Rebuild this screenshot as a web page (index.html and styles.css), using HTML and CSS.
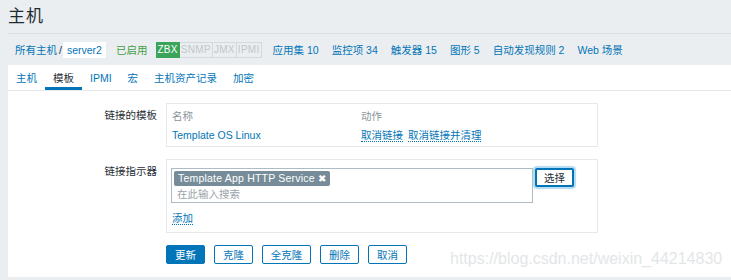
FILE: index.html
```html
<!DOCTYPE html>
<html lang="zh-CN">
<head>
  <meta charset="UTF-8">
  <title>主机</title>
  <link rel="stylesheet" href="styles.css">
</head>
<body>
  <header class="page-header">
    <h1>主机</h1>
  </header>

  <nav class="crumbs">
    <a href="#" class="crumb-link first">所有主机</a>
    <span class="crumb-sep">/</span>
    <span class="crumb-current">server2</span>
    <span class="status-on">已启用</span>
    <span class="avail">
      <span class="avail-item zbx">ZBX</span><span class="avail-item">SNMP</span><span class="avail-item">JMX</span><span class="avail-item">IPMI</span>
    </span>
    <a href="#" class="crumb-link">应用集 10</a>
    <a href="#" class="crumb-link">监控项 34</a>
    <a href="#" class="crumb-link">触发器 15</a>
    <a href="#" class="crumb-link">图形 5</a>
    <a href="#" class="crumb-link">自动发现规则 2</a>
    <a href="#" class="crumb-link">Web 场景</a>
  </nav>

  <main class="panel">
    <ul class="tabs">
      <li><a href="#">主机</a></li>
      <li class="active"><a href="#">模板</a></li>
      <li><a href="#">IPMI</a></li>
      <li><a href="#">宏</a></li>
      <li><a href="#">主机资产记录</a></li>
      <li><a href="#">加密</a></li>
    </ul>

    <div class="form">
      <div class="form-row">
        <label class="form-label">链接的模板</label>
        <div class="form-box">
          <table class="linked">
            <tr>
              <th class="col-name">名称</th>
              <th>动作</th>
            </tr>
            <tr>
              <td><a href="#" class="link">Template OS Linux</a></td>
              <td>
                <a href="#" class="dotted">取消链接</a>
                <a href="#" class="dotted">取消链接并清理</a>
              </td>
            </tr>
          </table>
        </div>
      </div>

      <div class="form-row">
        <label class="form-label">链接指示器</label>
        <div class="form-box box-tall">
          <div class="ms-row">
            <div class="multiselect">
              <span class="tag">Template App HTTP Service <span class="tag-x">✖</span></span>
              <span class="placeholder">在此输入搜索</span>
            </div>
            <button class="btn-select">选择</button>
          </div>
          <a href="#" class="dotted add-link">添加</a>
        </div>
      </div>

      <div class="buttons">
        <button class="btn primary">更新</button>
        <button class="btn">克隆</button>
        <button class="btn wide">全克隆</button>
        <button class="btn">删除</button>
        <button class="btn">取消</button>
      </div>
    </div>
  </main>

  <div class="watermark">https://blog.csdn.net/weixin_44214830</div>
</body>
</html>
```

FILE: styles.css
```css
body {
  margin: 0;
  padding: 0 0 0 8px;
  background-color: #ebeef0;
  color: #1f2c33;
  font-family: "Liberation Sans", "Noto Sans CJK SC", sans-serif;
  font-size: 10.5px;
  overflow: hidden;
}

a {
  text-decoration: none;
  color: #0275b8;
}

.page-header {
  border-bottom: 1px solid #dce1e4;
  height: 33px;
}

.page-header h1 {
  margin: 0;
  padding-top: 6px;
  font-size: 17px;
  font-weight: normal;
  line-height: 22px;
  letter-spacing: 1px;
}

.crumbs {
  display: flex;
  align-items: center;
  height: 31px;
  padding-left: 7px;
  white-space: nowrap;
}

.crumb-link {
  margin-right: 13px;
}

.crumb-link.first {
  margin-right: 2px;
}

.crumb-sep {
  color: #1f2c33;
  margin-right: 1px;
}

.crumb-current {
  background-color: #fff;
  padding: 2px 4px;
  color: #0275b8;
  margin-right: 10px;
  line-height: 12px;
}

.status-on {
  color: #429e47;
  margin-right: 9px;
}

.avail {
  display: flex;
  margin-right: 11px;
}

.avail-item {
  border: 1px solid #d3d9dc;
  border-left: none;
  color: #bfc7cc;
  padding: 0 1px;
  line-height: 14px;
  font-size: 10px;
  letter-spacing: 0.3px;
}

.avail-item.zbx {
  background-color: #3aa55a;
  border-color: #3aa55a;
  color: #fff;
}

.panel {
  background-color: #fff;
  height: 212px;
}

.tabs {
  list-style: none;
  margin: 0;
  padding: 0;
  display: flex;
  border-bottom: 1px solid #e6e9eb;
  height: 25px;
}

.tabs li {
  padding: 0 8px;
  height: 25px;
  line-height: 26px;
}

.tabs li.active {
  border-bottom: 3px solid #0275b8;
  height: 22px;
}

.tabs li.active a {
  color: #1f2c33;
}

.form {
  padding-top: 12px;
}

.form-row {
  display: flex;
  margin-bottom: 12px;
}

.form-label {
  width: 149px;
  text-align: right;
  padding-right: 9px;
  padding-top: 4px;
}

.form-box {
  width: 430px;
  border: 1px solid #e6e9eb;
  height: 42px;
}

.box-tall {
  height: 72px;
}

.linked {
  border-collapse: collapse;
  margin: 4px 0 0 5px;
}

.linked th {
  font-weight: normal;
  color: #8a9499;
  text-align: left;
  height: 14px;
  padding: 0;
}

.linked td {
  padding: 4px 0 0 0;
  height: 14px;
}

.col-name {
  width: 189px;
}

.dotted {
  border-bottom: 1px dotted #0275b8;
  margin-right: 2px;
}

.ms-row {
  display: flex;
  align-items: flex-start;
  margin: 8px 0 0 4px;
}

.multiselect {
  width: 360px;
  height: 33px;
  border: 1px solid #acbbc4;
  margin-right: 2px;
}

.tag {
  display: inline-block;
  background-color: #768d99;
  color: #fff;
  margin: 2px 0 0 2px;
  padding: 0 4px;
  line-height: 14px;
  border-radius: 2px;
  letter-spacing: 0.2px;
}

.tag-x {
  font-size: 10px;
}

.placeholder {
  display: block;
  color: #9aa3a8;
  margin: 2px 0 0 5px;
  line-height: 13px;
}

.btn-select {
  width: 39px;
  height: 19px;
  padding: 0;
  background-color: #fff;
  border: 2px solid #0275b8;
  border-radius: 2px;
  box-shadow: 0 0 1px 2px #b3dbf3;
  font-family: inherit;
  font-size: 10.5px;
  color: #1f2c33;
}

.add-link {
  display: inline-block;
  margin: 9px 0 0 5px;
  line-height: 12px;
}

.buttons {
  display: flex;
  margin-left: 158px;
}

.btn {
  width: 39px;
  height: 19px;
  padding: 0;
  margin-right: 9px;
  background-color: #fff;
  border: 1px solid #0275b8;
  border-radius: 2px;
  color: #0275b8;
  font-family: inherit;
  font-size: 10.5px;
}

.btn.wide {
  width: 49px;
}

.btn.primary {
  background-color: #0275b8;
  color: #fff;
}

.watermark {
  position: absolute;
  left: 450px;
  top: 250px;
  font-size: 16px;
  color: #e3e6e8;
  font-family: "Liberation Sans", sans-serif;
}
```
